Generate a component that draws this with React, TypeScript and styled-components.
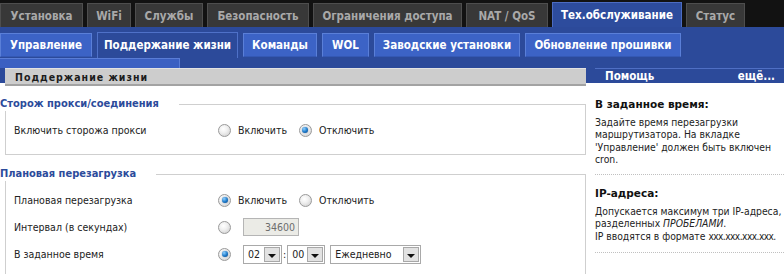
import React from 'react';
import styled, { createGlobalStyle } from 'styled-components';

const GlobalStyle = createGlobalStyle`
  html, body {
    margin: 0;
    padding: 0;
    background: #fff;
  }
  body {
    font-family: Tahoma, "DejaVu Sans Condensed", "Liberation Sans", sans-serif;
    font-size: 10.5px;
    color: #222;
    overflow: hidden;
  }
`;

const mainTabs = [
    { title: 'Установка', w: 83 },
    { title: 'WiFi', w: 44 },
    { title: 'Службы', w: 68 },
    { title: 'Безопасность', w: 102 },
    { title: 'Ограничения доступа', w: 149 },
    { title: 'NAT / QoS', w: 82 },
    { title: 'Тех.обслуживание', w: 130, active: true },
    { title: 'Статус', w: 59 },
];

const subTabs = [
    { title: 'Управление', w: 92 },
    { title: 'Поддержание жизни', w: 141, active: true },
    { title: 'Команды', w: 74 },
    { title: 'WOL', w: 47 },
    { title: 'Заводские установки', w: 146 },
    { title: 'Обновление прошивки', w: 156 },
];

const Page = styled.div`
    width: 784px;
    height: 274px;
    overflow: hidden;
`;

const MainNav = styled.nav`
    display: flex;
    align-items: flex-end;
    gap: 4px;
    height: 27px;
    background: #121212;
`;

const MainTab = styled.div<{ $w: number; $active?: boolean }>`
    box-sizing: border-box;
    width: ${p => p.$w}px;
    height: ${p => (p.$active ? 25 : 24)}px;
    display: flex;
    align-items: center;
    justify-content: center;
    font-family: Tahoma, "DejaVu Sans Condensed", "Liberation Sans", sans-serif;
    font-weight: bold;
    font-size: 11.5px;
    white-space: nowrap;
    color: ${p => (p.$active ? '#fff' : '#a9a9a9')};
    background: ${p => (p.$active ? '#2d4c9d' : '#383838')};
    border: 1px solid ${p => (p.$active ? '#4c6cc2' : '#4e4e4e')};
    border-bottom: none;
`;

const SubBar = styled.div`
    background: #2c4a9a;
    padding-top: 5px;
`;

const SubNav = styled.div`
    display: flex;
    align-items: flex-end;
    gap: 5px;
    height: 26px;
`;

const SubTab = styled.div<{ $w: number; $active?: boolean }>`
    box-sizing: border-box;
    width: ${p => p.$w}px;
    height: ${p => (p.$active ? 26 : 24)}px;
    margin-bottom: ${p => (p.$active ? 0 : 1)}px;
    display: flex;
    align-items: center;
    justify-content: center;
    padding-bottom: ${p => (p.$active ? 2 : 0)}px;
    font-family: Tahoma, "DejaVu Sans Condensed", "Liberation Sans", sans-serif;
    font-weight: bold;
    font-size: 11.5px;
    white-space: nowrap;
    color: #fff;
    background: ${p => (p.$active ? '#2c4a9a' : '#3c63c6')};
    border: 1px solid ${p => (p.$active ? '#4f71c8' : '#5a7fd8')};
    border-bottom: ${p => (p.$active ? 'none' : '1px solid #3458b4')};
`;

const SubStrip = styled.div`
    box-sizing: border-box;
    width: 180px;
    height: 10px;
    background: #3b60c2;
    border-top: 1px solid #5a7dd6;
    border-right: 1px solid #5a7dd6;
`;

const Body = styled.div`
    display: flex;
    gap: 9px;
    background: linear-gradient(to bottom, #2c4a9a 0, #2c4a9a 15px, #fff 15px);
`;

const MainCol = styled.main`
    width: 581px;
    padding-left: 5px;
`;

const PageTitle = styled.div`
    box-sizing: border-box;
    height: 18px;
    padding-left: 10px;
    display: flex;
    align-items: center;
    background: #cdcdcd;
    border-top: 1px solid #e2e2e2;
    border-bottom: 2px solid #a3a3a3;
    font-family: "DejaVu Sans Condensed", "DejaVu Sans", Verdana, sans-serif;
    font-weight: bold;
    font-size: 10.5px;
    letter-spacing: 1px;
    color: #1c1c1c;
`;

const Fieldset = styled.fieldset<{ $top: number }>`
    margin: ${p => p.$top}px 0 0 0;
    padding: 9px 0 14px 8px;
    border: 1px solid #cfcfcf;
    min-width: 0;
`;

const Legend = styled.legend`
    margin-left: -14px;
    padding: 0 20px 0 0;
    background: #fff;
    color: #2c4b9b;
    font-family: Tahoma, "DejaVu Sans Condensed", "Liberation Sans", sans-serif;
    font-weight: bold;
    font-size: 11px;
    line-height: 14px;
`;

const Rows = styled.div`
    display: flex;
    flex-direction: column;
    gap: 7px;
`;

const Row = styled.div`
    display: grid;
    grid-template-columns: 204px auto;
    align-items: center;
    height: 20px;
`;

const Label = styled.span`
    color: #222;
`;

const Controls = styled.div`
    display: flex;
    align-items: center;
`;

const RadioWrap = styled.label`
    display: inline-flex;
    align-items: center;
    gap: 7px;
    margin-right: 12px;
    color: #222;
`;

const RadioDot = styled.span<{ $on?: boolean }>`
    box-sizing: border-box;
    width: 13px;
    height: 13px;
    border-radius: 50%;
    border: 1px solid #9a9a9a;
    background: radial-gradient(circle at 40% 35%, #ffffff 0, #f0f0f0 40%, #c9c9c9 100%);
    display: flex;
    align-items: center;
    justify-content: center;
    flex: none;
    &::after {
        content: '';
        display: ${p => (p.$on ? 'block' : 'none')};
        width: 6px;
        height: 6px;
        border-radius: 50%;
        background: radial-gradient(circle at 35% 30%, #8fd0ff 0, #1b78c8 55%, #0b3f7c 100%);
        box-shadow: 0 0 1px #0b3f7c;
    }
`;

const Radio = ({ on, children }: { on?: boolean; children?: React.ReactNode }) => (
    <RadioWrap>
        <RadioDot $on={on} />
        {children}
    </RadioWrap>
);

const NumberBox = styled.div`
    box-sizing: border-box;
    width: 56px;
    height: 18px;
    display: flex;
    align-items: center;
    justify-content: flex-end;
    padding-right: 3px;
    background: #ebebe6;
    border: 1px solid #b5b5b5;
    color: #6d6d6d;
`;

const SelectBox = styled.div<{ $w: number }>`
    box-sizing: border-box;
    width: ${p => p.$w}px;
    height: 19px;
    display: flex;
    align-items: center;
    justify-content: space-between;
    padding: 0 1px 0 4px;
    background: #fff;
    border: 1px solid #a9a9a9;
    color: #222;
`;

const Arrow = styled.span`
    box-sizing: border-box;
    width: 16px;
    height: 15px;
    display: flex;
    align-items: center;
    justify-content: center;
    background: #e2e2e2;
    border: 1px solid #a8a8a8;
    &::after {
        content: '';
        margin-top: 3px;
        border-left: 4px solid transparent;
        border-right: 4px solid transparent;
        border-top: 4px solid #111;
    }
`;

const Colon = styled.span`
    margin: 0 1px;
`;

const Gap = styled.span`
    width: 5px;
`;

const SideCol = styled.aside`
    width: 189px;
`;

const HelpHead = styled.div`
    box-sizing: border-box;
    height: 15px;
    display: flex;
    align-items: center;
    justify-content: space-between;
    padding: 0 9px 0 10px;
    background: #2c4a9a;
    border-top: 1px solid #4f6fc4;
    font-family: Tahoma, "DejaVu Sans Condensed", "Liberation Sans", sans-serif;
    font-weight: bold;
    font-size: 11.5px;
    color: #fff;
`;

const HelpItem = styled.div<{ $pt: number }>`
    padding: ${p => p.$pt}px 0 9px 0;
    border-bottom: 1px dotted #c0c0c0;
`;

const HelpTitle = styled.div`
    font-family: "DejaVu Sans", Verdana, sans-serif;
    font-weight: bold;
    font-size: 10.5px;
    line-height: 14px;
    color: #111;
    margin-bottom: 5px;
`;

const HelpText = styled.div`
    font-size: 10.3px;
    line-height: 12.3px;
    color: #222;
    white-space: nowrap;
`;

const Mask = styled.span`
    font-size: 10px;
    letter-spacing: -0.5px;
`;

export default function App() {
    return (
        <Page>
            <GlobalStyle />
            <MainNav>
                {mainTabs.map(t => (
                    <MainTab key={t.title} $w={t.w} $active={t.active}>
                        {t.title}
                    </MainTab>
                ))}
            </MainNav>
            <SubBar>
                <SubNav>
                    {subTabs.map(t => (
                        <SubTab key={t.title} $w={t.w} $active={t.active}>
                            {t.title}
                        </SubTab>
                    ))}
                </SubNav>
                <SubStrip />
            </SubBar>
            <Body>
                <MainCol>
                    <PageTitle>Поддержание жизни</PageTitle>
                    <Fieldset $top={11}>
                        <Legend>Сторож прокси/соединения</Legend>
                        <Rows>
                            <Row>
                                <Label>Включить сторожа прокси</Label>
                                <Controls>
                                    <Radio>Включить</Radio>
                                    <Radio on>Отключить</Radio>
                                </Controls>
                            </Row>
                        </Rows>
                    </Fieldset>
                    <Fieldset $top={12}>
                        <Legend>Плановая перезагрузка</Legend>
                        <Rows>
                            <Row>
                                <Label>Плановая перезагрузка</Label>
                                <Controls>
                                    <Radio on>Включить</Radio>
                                    <Radio>Отключить</Radio>
                                </Controls>
                            </Row>
                            <Row>
                                <Label>Интервал (в секундах)</Label>
                                <Controls>
                                    <Radio />
                                    <NumberBox>34600</NumberBox>
                                </Controls>
                            </Row>
                            <Row>
                                <Label>В заданное время</Label>
                                <Controls>
                                    <Radio on />
                                    <SelectBox $w={39}>
                                        02<Arrow />
                                    </SelectBox>
                                    <Colon>:</Colon>
                                    <SelectBox $w={38}>
                                        00<Arrow />
                                    </SelectBox>
                                    <Gap />
                                    <SelectBox $w={91}>
                                        Ежедневно<Arrow />
                                    </SelectBox>
                                </Controls>
                            </Row>
                        </Rows>
                    </Fieldset>
                </MainCol>
                <SideCol>
                    <HelpHead>
                        <span>Помощь</span>
                        <span>ещё...</span>
                    </HelpHead>
                    <HelpItem $pt={14}>
                        <HelpTitle>В заданное время:</HelpTitle>
                        <HelpText>
                            Задайте время перезагрузки
                            <br />
                            маршрутизатора. На вкладке
                            <br />
                            'Управление' должен быть включен
                            <br />
                            cron.
                        </HelpText>
                    </HelpItem>
                    <HelpItem $pt={11}>
                        <HelpTitle>IP-адреса:</HelpTitle>
                        <HelpText>
                            Допускается максимум три IP-адреса,
                            <br />
                            разделенных <i>ПРОБЕЛАМИ</i>.
                            <br />
                            IP вводятся в формате <Mask>xxx.xxx.xxx.xxx.</Mask>
                        </HelpText>
                    </HelpItem>
                </SideCol>
            </Body>
        </Page>
    );
}
